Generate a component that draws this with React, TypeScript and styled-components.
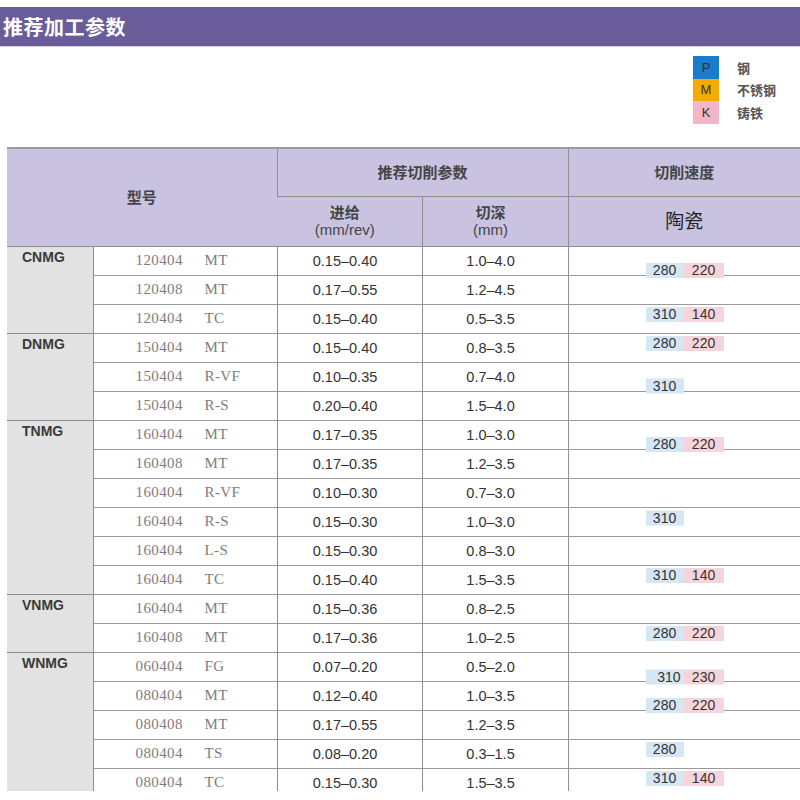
import React from "react";
import styled, { createGlobalStyle } from "styled-components";

const Global = createGlobalStyle`
  html, body { margin: 0; padding: 0; background: #fff; }
  body { font-family: "Liberation Sans", "Noto Sans CJK SC", sans-serif; color: #333; overflow: hidden; }
`;

const Page = styled.div`
  width: 800px;
  height: 800px;
  padding-top: 7px;
  box-sizing: border-box;
  overflow: hidden;
`;

const TitleBar = styled.div`
  height: 39px;
  background: #685c9b;
  border-bottom: 1px solid #d3d0e2;
  display: flex;
  align-items: center;
  padding-left: 3px;
  color: #fff;
  font-size: 20px;
  font-weight: 700;
  letter-spacing: 0.5px;
`;

const LegendArea = styled.div`
  height: 100px;
  box-sizing: border-box;
  padding: 9px 0 0 693px;
`;

const Legend = styled.div`
  display: grid;
  grid-template-columns: 26px auto;
  grid-auto-rows: 22.5px;
  column-gap: 18px;
  align-items: center;
`;

const Swatch = styled.div<{ $c: string }>`
  height: 100%;
  background: ${(p) => p.$c};
  display: flex;
  align-items: center;
  justify-content: center;
  font-size: 13px;
  color: #333;
`;

const LegendLabel = styled.div`
  font-size: 13px;
  color: #555;
  font-weight: 700;
`;

const Clip = styled.div`
  height: 644px;
  overflow: hidden;
  padding-left: 7px;
`;

const Table = styled.table`
  width: 793px;
  table-layout: fixed;
  border-collapse: collapse;
  border-top: 2px solid #9b9b9b;
`;

const HeadCell = styled.th<{ $big?: boolean; $nudge?: boolean }>`
  background: #c9c3e1;
  border-left: 1px solid #8f8f8f;
  border-bottom: 1px solid #8f8f8f;
  padding: 0 ${(p) => (p.$nudge ? "9px" : "0")} 0 0;
  text-align: center;
  vertical-align: middle;
  font-size: ${(p) => (p.$big ? "19px" : "15px")};
  font-weight: ${(p) => (p.$big ? 400 : 700)};
  color: ${(p) => (p.$big ? "#222" : "#444")};
  line-height: 17px;
  &:first-child { border-left: none; }
`;

const Sub = styled.span`
  display: block;
  font-weight: 400;
`;

const HeadRow = styled.tr<{ $h: number }>`
  height: ${(p) => p.$h}px;
`;

const Row = styled.tr`
  height: 29px;
`;

const SeriesCell = styled.td`
  background: #e2e2e2;
  vertical-align: top;
  padding: 2px 0 0 15px;
  font-size: 14px;
  font-weight: 700;
  color: #3a3a3a;
  border-top: 1px solid #8f8f8f;
  border-right: 1px solid #8f8f8f;
`;

const ModelCell = styled.td`
  padding: 0 0 0 42px;
  border-top: 1px solid #9a9a9a;
  font-family: "Liberation Serif", serif;
  font-size: 15px;
  letter-spacing: 0.4px;
  color: #7d7d7d;
  white-space: nowrap;
`;

const ModelNum = styled.span`
  display: inline-block;
  width: 69px;
`;

const ValueCell = styled.td`
  border-top: 1px solid #9a9a9a;
  border-left: 1px solid #8f8f8f;
  text-align: center;
  padding: 0 9px 0 0;
  font-size: 14.5px;
  color: #333;
`;

const SpeedCell = styled.td`
  position: relative;
  border-top: 1px solid #9a9a9a;
  border-left: 1px solid #8f8f8f;
  padding: 0;
`;

const BadgeGroup = styled.div`
  position: absolute;
  left: 77px;
  top: 50%;
  display: flex;
  z-index: 1;
`;

const Badge = styled.span<{ $kind: "a" | "b"; $shift?: boolean }>`
  display: flex;
  align-items: center;
  justify-content: ${(p) => (p.$shift ? "flex-end" : "center")};
  box-sizing: border-box;
  padding-right: ${(p) => (p.$shift ? "3px" : "0")};
  width: ${(p) => (p.$kind === "a" ? 38 : 40)}px;
  height: 15px;
  font-size: 14px;
  color: #333;
  background: ${(p) => (p.$kind === "a" ? "#d5e6f4" : "#f6d4da")};
`;

type R = [string, string, string, string];
const groups: { s: string; rows: R[] }[] = [
  {
    s: "CNMG",
    rows: [
      ["120404", "MT", "0.15–0.40", "1.0–4.0"],
      ["120408", "MT", "0.17–0.55", "1.2–4.5"],
      ["120404", "TC", "0.15–0.40", "0.5–3.5"],
    ],
  },
  {
    s: "DNMG",
    rows: [
      ["150404", "MT", "0.15–0.40", "0.8–3.5"],
      ["150404", "R-VF", "0.10–0.35", "0.7–4.0"],
      ["150404", "R-S", "0.20–0.40", "1.5–4.0"],
    ],
  },
  {
    s: "TNMG",
    rows: [
      ["160404", "MT", "0.17–0.35", "1.0–3.0"],
      ["160408", "MT", "0.17–0.35", "1.2–3.5"],
      ["160404", "R-VF", "0.10–0.30", "0.7–3.0"],
      ["160404", "R-S", "0.15–0.30", "1.0–3.0"],
      ["160404", "L-S", "0.15–0.30", "0.8–3.0"],
      ["160404", "TC", "0.15–0.40", "1.5–3.5"],
    ],
  },
  {
    s: "VNMG",
    rows: [
      ["160404", "MT", "0.15–0.36", "0.8–2.5"],
      ["160408", "MT", "0.17–0.36", "1.0–2.5"],
    ],
  },
  {
    s: "WNMG",
    rows: [
      ["060404", "FG", "0.07–0.20", "0.5–2.0"],
      ["080404", "MT", "0.12–0.40", "1.0–3.5"],
      ["080408", "MT", "0.17–0.55", "1.2–3.5"],
      ["080404", "TS", "0.08–0.20", "0.3–1.5"],
      ["080404", "TC", "0.15–0.30", "1.5–3.5"],
    ],
  },
];

type B = { a: string; b?: string; dy: number; shift?: boolean };
const badges: Record<number, B> = {
  0: { a: "280", b: "220", dy: 9.5 },
  2: { a: "310", b: "140", dy: -4.5 },
  3: { a: "280", b: "220", dy: -4.5 },
  4: { a: "310", dy: 9 },
  6: { a: "280", b: "220", dy: 9.5 },
  9: { a: "310", dy: -4 },
  11: { a: "310", b: "140", dy: -4.5 },
  13: { a: "280", b: "220", dy: -4.5 },
  14: { a: "310", b: "230", dy: 10, shift: true },
  15: { a: "280", b: "220", dy: 9.5 },
  17: { a: "280", dy: -4.5 },
  18: { a: "310", b: "140", dy: -4.5 },
};

export default function App() {
  let idx = 0;
  return (
    <Page>
      <Global />
      <TitleBar>推荐加工参数</TitleBar>
      <LegendArea>
        <Legend>
          <Swatch $c="#1a7dcc">P</Swatch>
          <LegendLabel>钢</LegendLabel>
          <Swatch $c="#f5aa00">M</Swatch>
          <LegendLabel>不锈钢</LegendLabel>
          <Swatch $c="#f3b6c8">K</Swatch>
          <LegendLabel>铸铁</LegendLabel>
        </Legend>
      </LegendArea>
      <Clip>
        <Table>
          <colgroup>
            <col style={{ width: 86 }} />
            <col style={{ width: 184 }} />
            <col style={{ width: 145 }} />
            <col style={{ width: 146 }} />
            <col style={{ width: 232 }} />
          </colgroup>
          <thead>
            <HeadRow $h={48}>
              <HeadCell colSpan={2} rowSpan={2}>型号</HeadCell>
              <HeadCell colSpan={2}>推荐切削参数</HeadCell>
              <HeadCell>切削速度</HeadCell>
            </HeadRow>
            <HeadRow $h={50}>
              <HeadCell $nudge>
                进给
                <Sub>(mm/rev)</Sub>
              </HeadCell>
              <HeadCell $nudge>
                切深
                <Sub>(mm)</Sub>
              </HeadCell>
              <HeadCell $big>陶瓷</HeadCell>
            </HeadRow>
          </thead>
          <tbody>
            {groups.map((g) =>
              g.rows.map((r, i) => {
                const n = idx++;
                const b = badges[n];
                return (
                  <Row key={n}>
                    {i === 0 && <SeriesCell rowSpan={g.rows.length}>{g.s}</SeriesCell>}
                    <ModelCell>
                      <ModelNum>{r[0]}</ModelNum>
                      {r[1]}
                    </ModelCell>
                    <ValueCell>{r[2]}</ValueCell>
                    <ValueCell>{r[3]}</ValueCell>
                    <SpeedCell>
                      {b && (
                        <BadgeGroup style={{ transform: `translateY(calc(-50% + ${b.dy}px))` }}>
                          <Badge $kind="a" $shift={b.shift}>{b.a}</Badge>
                          {b.b && <Badge $kind="b">{b.b}</Badge>}
                        </BadgeGroup>
                      )}
                    </SpeedCell>
                  </Row>
                );
              })
            )}
          </tbody>
        </Table>
      </Clip>
    </Page>
  );
}
